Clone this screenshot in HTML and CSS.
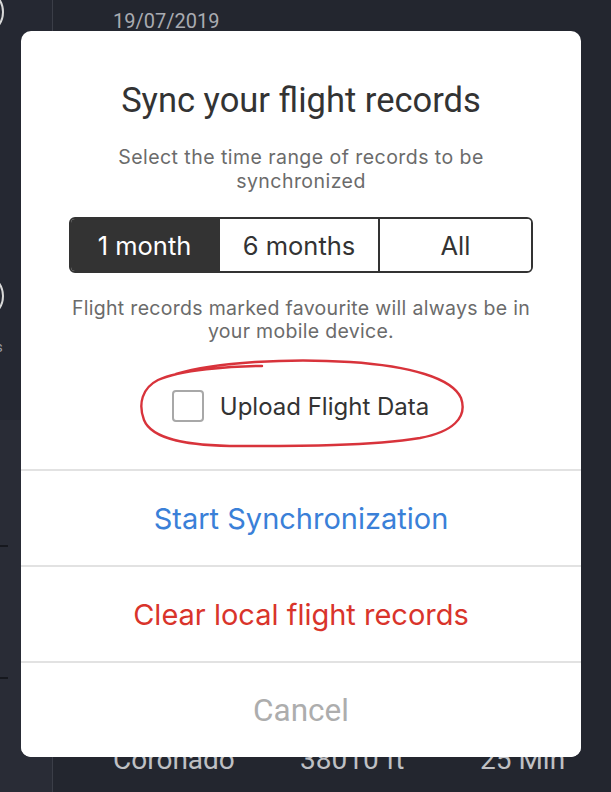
FILE: index.html
```html
<!DOCTYPE html>
<html lang="en">
<head>
    <meta charset="UTF-8">
    <meta name="viewport" content="width=device-width, initial-scale=1.0">
    <title>Sync flight records</title>
    <link rel="stylesheet" href="styles.css">
</head>
<body>
    <div class="screen">
        <aside class="sidebar">
            <div class="ring ring-top"></div>
            <div class="ring ring-mid"></div>
            <span class="side-label">Records</span>
            <div class="side-lower">
                <div class="side-rule"></div>
                <div class="side-rule"></div>
            </div>
        </aside>
        <main class="flights">
            <div class="flight-date">19/07/2019</div>
            <div class="flight-row">
                <span>Coronado</span>
                <span>38010 ft</span>
                <span>25 Min</span>
            </div>
        </main>
    </div>

    <div class="dialog">
        <div class="dialog-body">
            <h2 class="dialog-title">Sync your flight records</h2>
            <p class="dialog-text">Select the time range of records to be<br>synchronized</p>
            <div class="segmented">
                <button class="segment active">1 month</button>
                <button class="segment">6 months</button>
                <button class="segment">All</button>
            </div>
            <p class="dialog-text note">Flight records marked favourite will always be in<br>your mobile device.</p>
            <label class="upload">
                <span class="checkbox"></span>
                <span>Upload Flight Data</span>
            </label>
        </div>
        <div class="actions">
            <button class="action action-sync">Start Synchronization</button>
            <button class="action action-clear">Clear local flight records</button>
            <button class="action action-cancel">Cancel</button>
        </div>
    </div>

    <!-- hand drawn marker round the checkbox -->
    <svg class="scribble" width="611" height="792" viewBox="0 0 611 792">
        <path d="M176 374 C 215 362, 290 358, 350 362 C 410 366, 452 378, 461 398 C 468 418, 452 432, 420 438 C 370 446, 300 446, 240 446 C 190 446, 152 440, 144 420 C 138 404, 142 388, 158 380 C 180 370, 230 366, 262 366"
              fill="none" stroke="#d8333b" stroke-width="2.4" stroke-linecap="round"/>
    </svg>
</body>
</html>
```

FILE: styles.css
```css
html, body {
    margin: 0;
    height: 100%;
}
body {
    background-color: #23262f;
    font-family: Roboto, "Liberation Sans", sans-serif;
    overflow: hidden;
}
.screen {
    display: flex;
    height: 100%;
}
.sidebar {
    width: 52px;
    border-right: 1px solid #3b3e48;
    display: flex;
    flex-direction: column;
    overflow: hidden;
    background-color: #252832;
}
.ring {
    width: 44px;
    height: 44px;
    border: 2px solid #d8d8d8;
    border-radius: 50%;
    margin-left: -44px;
    flex-shrink: 0;
}
.ring-top {
    margin-top: -12px;
}
.ring-mid {
    margin-top: 236px;
}
.side-label {
    margin-top: 18px;
    margin-left: -52px;
    font-size: 15px;
    color: #9a9ca3;
}
.side-lower {
    margin-top: 64px;
    flex: 1;
    background-color: #292c36;
    padding-top: 125px;
}
.side-rule {
    width: 8px;
    height: 2px;
    background-color: #16181e;
    margin-bottom: 130px;
}
.flights {
    flex: 1;
    display: flex;
    flex-direction: column;
    justify-content: space-between;
    padding: 8px 0 15px 60px;
}
.flight-date {
    font-size: 20px;
    color: #a9abb1;
    line-height: 26px;
}
.flight-row {
    display: grid;
    grid-template-columns: 187px 180px auto;
    font-size: 28px;
    line-height: 34px;
    color: #bfc0c4;
}

.dialog {
    position: absolute;
    left: 21px;
    top: 31px;
    width: 560px;
    height: 726px;
    background: white;
    border-radius: 10px;
    display: flex;
    flex-direction: column;
    overflow: hidden;
}
.dialog-body {
    padding-top: 49px;
    display: flex;
    flex-direction: column;
    align-items: center;
    flex: 1;
}
.dialog-title {
    margin: 0;
    font-weight: normal;
    font-size: 34.5px;
    line-height: 40px;
    color: #333;
}
.dialog-text {
    margin: 25px 0 0;
    font-family: Inter, "Noto Sans", sans-serif;
    font-size: 19.5px;
    letter-spacing: 0.45px;
    line-height: 24px;
    color: #6b6b6b;
    text-align: center;
}
.dialog-text.note {
    margin-top: 24px;
    line-height: 23px;
    letter-spacing: 0.3px;
}
.segmented {
    margin-top: 24px;
    width: 464px;
    height: 56px;
    box-sizing: border-box;
    border: 2px solid #333;
    border-radius: 6px;
    overflow: hidden;
    display: grid;
    grid-template-columns: 147px 160px 1fr;
}
.segment {
    border: none;
    border-left: 2px solid #333;
    background: white;
    color: #333;
    font-family: Inter, "Noto Sans", sans-serif;
    font-size: 25.5px;
    padding: 0;
}
.segment:first-child {
    border-left: none;
}
.segment.active {
    background: #333;
    color: white;
}
.upload {
    margin-top: 47px;
    display: flex;
    align-items: center;
    gap: 16px;
    font-family: Inter, "Noto Sans", sans-serif;
    font-size: 24px;
    color: #333;
    margin-left: -1px;
}
.checkbox {
    width: 32px;
    height: 32px;
    box-sizing: border-box;
    border: 2px solid #a8a8a8;
    border-radius: 4px;
}
.actions {
    display: flex;
    flex-direction: column;
}
.action {
    height: 96px;
    border: none;
    border-top: 2px solid #e2e2e2;
    background: white;
    font-family: Inter, "Noto Sans", sans-serif;
    font-size: 29px;
    padding: 0;
}
.action-sync {
    color: #3a80d8;
}
.action-clear {
    color: #d9342b;
}
.action-cancel {
    color: #adadad;
    font-family: Roboto, sans-serif;
    font-size: 31.5px;
}
.scribble {
    position: absolute;
    left: 0;
    top: 0;
    pointer-events: none;
}
```
